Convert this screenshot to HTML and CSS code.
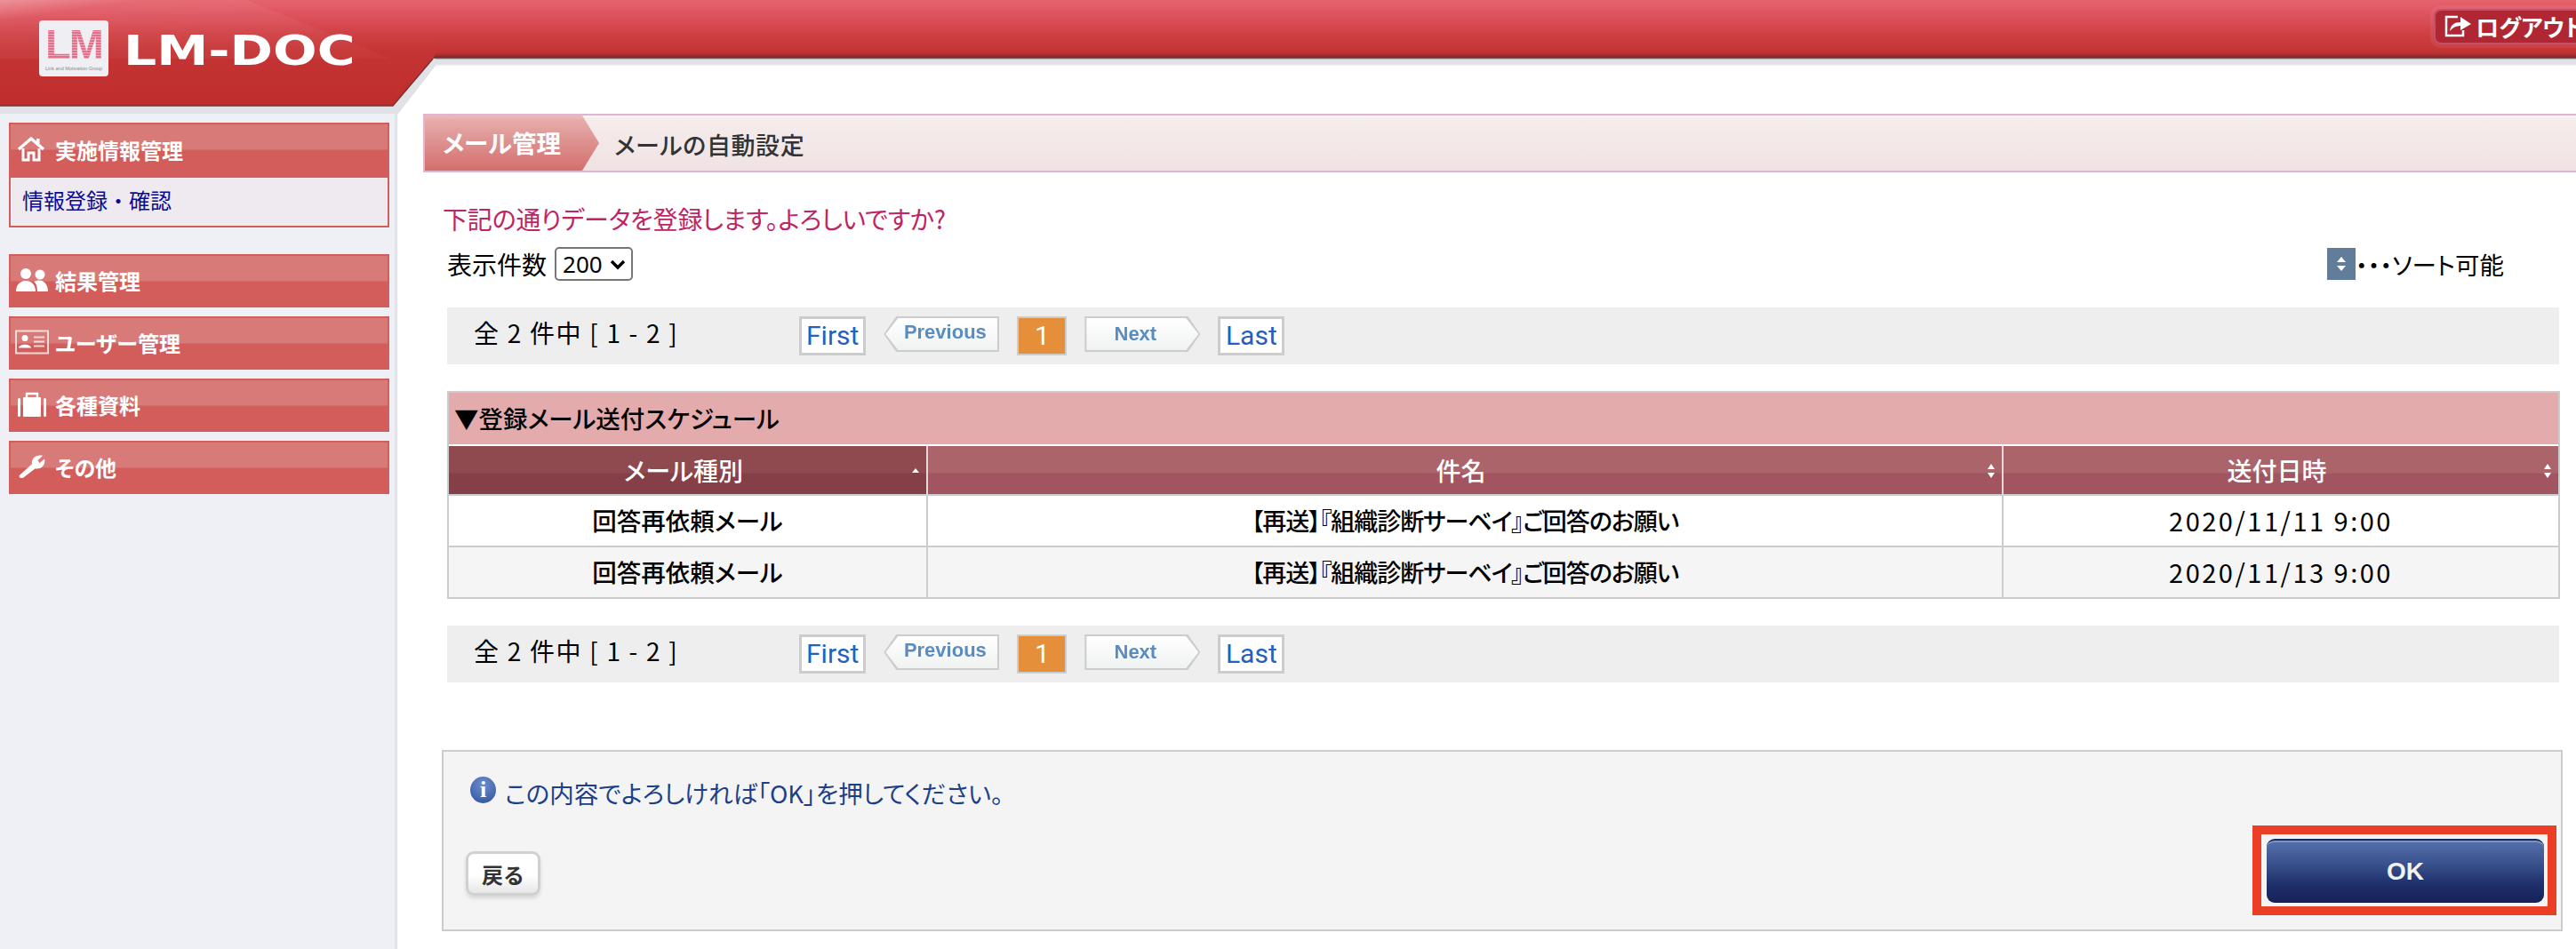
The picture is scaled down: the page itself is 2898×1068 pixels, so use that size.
FILE: index.html
```html
<!DOCTYPE html>
<html lang="ja">
<head>
<meta charset="utf-8">
<title>LM-DOC メールの自動設定</title>
<link rel="stylesheet" href="styles.css">
</head>
<body>
<div class="page">
  <header class="topbar">
    <a class="logout">
      <svg class="logout-icon" viewBox="0 0 32 26"><path d="M16 3H3V24H22V18" fill="none" stroke="#fff" stroke-width="2.5"/><path d="M7 19C8 12 12 9 19 9V3L31 11L19 18V13C14 13 10 15 7 19Z" fill="#fff"/></svg>
      <span>ログアウト</span>
    </a>
  </header>

  <div class="wing">
    <svg class="wing-shape" viewBox="0 0 490 128">
      <defs>
        <linearGradient id="wingRed" gradientUnits="userSpaceOnUse" x1="0" y1="0" x2="0" y2="119">
          <stop offset="0" stop-color="#e5636d"/>
          <stop offset=".118" stop-color="#df5560"/>
          <stop offset=".32" stop-color="#cf4044"/>
          <stop offset=".49" stop-color="#c53434"/>
          <stop offset="1" stop-color="#bf2d2d"/>
        </linearGradient>
        <linearGradient id="wingGlow" x1="0" y1="0" x2="1" y2="1">
          <stop offset="0" stop-color="#fff" stop-opacity=".3"/>
          <stop offset=".18" stop-color="#fff" stop-opacity=".06"/>
          <stop offset="1" stop-color="#fff" stop-opacity=".025"/>
        </linearGradient>
      </defs>
      <polygon points="0,119 442,119 487,66 490,66 490,74 448,128 0,128" fill="#e1e2e6"/>
      <polygon points="0,0 490,0 490,61 487,66 442,119 0,119" fill="url(#wingRed)"/>
      <polygon points="0,0 277,0 440,66 0,66" fill="url(#wingGlow)"/>
      <path d="M0 119H442L487 66" fill="none" stroke="#7b3032" stroke-width="1.5"/>
    </svg>
    <div class="brand">
      <div class="brand-mark">
        <span class="brand-lm">LM</span>
        <span class="brand-sub">Link and Motivation Group</span>
      </div>
      <span class="brand-name">LM-DOC</span>
    </div>
  </div>

  <div class="layout">
    <aside class="sidebar">
      <section class="menu-open">
        <div class="menu-item menu-item-flat">
          <svg class="menu-icon" viewBox="0 0 38 28"><path d="M4 14L18 2L32 14" fill="none" stroke="#fff" stroke-width="3.4"/><path d="M9 13V26H15V18H21V26H27V13" fill="none" stroke="#fff" stroke-width="3"/><rect x="24" y="2" width="3.5" height="7" fill="#fff"/></svg>
          <span>実施情報管理</span>
        </div>
        <a class="menu-link">情報登録・確認</a>
      </section>
      <nav class="menu-list">
        <div class="menu-item">
          <svg class="menu-icon" viewBox="0 0 38 28"><circle cx="12" cy="7" r="6" fill="#fff"/><circle cx="28" cy="8" r="5.5" fill="#fff"/><path d="M1 27C1 19 6 15 12 15C18 15 23 19 23 27Z" fill="#fff"/><path d="M24 15C31 13 37 18 37 27H25C25 22 24 18 21 16Z" fill="#fff"/></svg>
          <span>結果管理</span>
        </div>
        <div class="menu-item">
          <svg class="menu-icon" viewBox="0 0 38 27"><rect x="1" y="1" width="36" height="25" fill="none" stroke="#f6dcdc" stroke-width="2"/><circle cx="11" cy="9" r="3.5" fill="#fff"/><path d="M4 20C5 15 17 15 18 20Z" fill="#fff"/><path d="M21 8H33M21 13H33M21 18H33" stroke="#f6dcdc" stroke-width="2"/></svg>
          <span>ユーザー管理</span>
        </div>
        <div class="menu-item">
          <svg class="menu-icon" viewBox="0 0 38 28"><path d="M13 6V2H25V6" fill="none" stroke="#fff" stroke-width="2.4"/><rect x="9" y="6" width="20" height="22" rx="1" fill="#fff"/><rect x="3" y="7" width="3" height="21" rx="1.5" fill="#fff"/><rect x="32" y="7" width="3" height="21" rx="1.5" fill="#fff"/></svg>
          <span>各種資料</span>
        </div>
        <div class="menu-item">
          <svg class="menu-icon" viewBox="0 0 38 30"><path d="M6 29C4 29 3 27 4 25.500L19 12C18 6 23 0 32 2L26 7.500L28 11L34 6C36 14 29 19 23 17.500L9 28C8 29 7 29 6 29Z" fill="#fff"/></svg>
          <span>その他</span>
        </div>
      </nav>
    </aside>

    <main class="main">
      <div class="titlebar">
        <div class="title-tab">メール管理</div>
        <h1 class="title-text">メールの自動設定</h1>
      </div>

      <div class="content">
        <p class="notice">下記の通りデータを登録します。よろしいですか?</p>

        <div class="tools">
          <label class="count">表示件数
            <select class="count-select"><option>200</option></select>
          </label>
          <div class="legend">
            <span class="legend-icon">
              <svg viewBox="0 0 12 20" class="legend-arrows"><path d="M6 2L11 8H1ZM6 18L1 12H11Z" fill="#fff"/></svg>
            </span>
            <span>・・・ソート可能</span>
          </div>
        </div>

        <div class="pager">
          <span class="pager-count">全 2 件中 [ 1 - 2 ]</span>
          <a class="pg-link">First</a>
          <a class="pg-arrow pg-prev"><span>Previous</span></a>
          <span class="pg-current">1</span>
          <a class="pg-arrow pg-next"><span>Next</span></a>
          <a class="pg-link">Last</a>
        </div>

        <table class="schedule">
          <colgroup><col class="col-type"><col class="col-subject"><col class="col-date"></colgroup>
          <thead>
            <tr><th colspan="3" class="caption-cell">▼登録メール送付スケジュール</th></tr>
            <tr>
              <th class="head sorted">メール種別<svg class="sort-mark" viewBox="0 0 12 20"><path d="M6 7L10 12H2Z" fill="#fff"/></svg></th>
              <th class="head">件名<svg class="sort-mark" viewBox="0 0 12 20"><path d="M6 2L10 8H2ZM6 18L2 12H10Z" fill="#fff"/></svg></th>
              <th class="head">送付日時<svg class="sort-mark" viewBox="0 0 12 20"><path d="M6 2L10 8H2ZM6 18L2 12H10Z" fill="#fff"/></svg></th>
            </tr>
          </thead>
          <tbody>
            <tr><td>回答再依頼メール</td><td class="subject">【再送】『組織診断サーベイ』ご回答のお願い</td><td class="date">2020/11/11 9:00</td></tr>
            <tr class="even"><td>回答再依頼メール</td><td class="subject">【再送】『組織診断サーベイ』ご回答のお願い</td><td class="date">2020/11/13 9:00</td></tr>
          </tbody>
        </table>

        <div class="pager pager-bottom">
          <span class="pager-count">全 2 件中 [ 1 - 2 ]</span>
          <a class="pg-link">First</a>
          <a class="pg-arrow pg-prev"><span>Previous</span></a>
          <span class="pg-current">1</span>
          <a class="pg-arrow pg-next"><span>Next</span></a>
          <a class="pg-link">Last</a>
        </div>

        <section class="confirm">
          <p class="confirm-text">
            <span class="info-icon">i</span>
            <span class="confirm-copy">この内容でよろしければ「OK」を押してください。</span>
          </p>
          <div class="confirm-actions">
            <button class="btn-back">戻る</button>
            <div class="ok-mark"><button class="btn-ok">OK</button></div>
          </div>
        </section>
      </div>
    </main>
  </div>
</div>
</body>
</html>
```
FILE: styles.css
```css
* { box-sizing: border-box; }
html, body { margin: 0; padding: 0; height: 100%; overflow: hidden; background: #fff; }
body {
  font-family: "Noto Sans CJK JP", "Noto Sans", sans-serif;
  font-feature-settings: "palt";
  color: #000;
}
.page { position: relative; width: 2898px; height: 1068px; overflow: hidden; display: flex; flex-direction: column; }

/* header */
.topbar {
  height: 74px;
  flex: none;
  display: flex;
  justify-content: flex-end;
  align-items: flex-start;
  padding-top: 10px;
  background: linear-gradient(#e5636d 0, #df5560 14px, #cf4044 38px, #c53434 58px, #b52e2e 61px, #6e2c2e 65px, #8a8a8e 66px, #e1e2e6 67px, #e1e2e6 72px, #f6f6f8 74px);
}
.logout {
  width: 200px;
  height: 40px;
  margin-right: -40px;
  padding: 0 0 2px 9px;
  display: flex;
  align-items: center;
  gap: 4px;
  background: #b02733;
  border: 2px solid #c2506a;
  border-radius: 8px;
  box-shadow: 0 0 0 4px rgba(255, 255, 255, .06);
  color: #fff;
  font-size: 26px;
  font-weight: 700;
}
.logout-icon { width: 32px; height: 26px; flex: none; }

.wing { position: absolute; left: 0; top: 0; width: 490px; height: 128px; }
.wing-shape { position: absolute; inset: 0; width: 100%; height: 100%; display: block; }
.brand { position: relative; display: flex; align-items: flex-start; padding: 23px 0 0 44px; }
.brand-mark {
  width: 78px;
  height: 63px;
  background: #efeff3;
  border-radius: 4px;
  display: flex;
  flex-direction: column;
  align-items: center;
  padding-top: 4px;
}
.brand-lm {
  font-family: "Liberation Sans", sans-serif;
  font-size: 47px;
  line-height: 46px;
  font-weight: 700;
  letter-spacing: -2px;
  background: repeating-linear-gradient(#e2708a 0 2px, #f0a8b8 2px 3px);
  -webkit-background-clip: text;
  background-clip: text;
  color: transparent;
}
.brand-sub { font-family: "Liberation Sans", sans-serif; font-size: 5.500px; line-height: 8px; color: #888; white-space: nowrap; }
.brand-name {
  margin: 11px 0 0 17px;
  font-family: "DejaVu Sans", sans-serif;
  font-size: 46px;
  line-height: 46px;
  font-weight: 700;
  color: #fff;
  transform: scaleX(1.27);
  transform-origin: left center;
}

/* layout */
.layout { flex: 1; display: grid; grid-template-columns: 447px 1fr; min-height: 0; }
.sidebar {
  background: #eff0f6;
  border-right: 3px solid #e2e3e8;
  padding: 64px 6px 0 10px;
}
.menu-open { border: 2px solid #d25d5a; height: 118px; background: #eeeaf0; }
.menu-item {
  height: 60px;
  display: flex;
  align-items: center;
  gap: 7px;
  padding: 0 0 2px 5px;
  border: 2px solid #d25d5a;
  background: linear-gradient(#d87b78 0 28px, #d25d5a 29px);
  background-clip: padding-box;
  background-color: #d25d5a;
  color: #fff;
  font-size: 24px;
  font-weight: 700;
}
.menu-item-flat { border: 0; padding: 0 0 4px 5px; height: 60px; background: linear-gradient(#d87b78 0 28px, #d25d5a 29px); }
.menu-icon { width: 38px; height: 28px; flex: none; }
.menu-link { display: block; padding: 7px 0 0 13px; line-height: 36px; font-size: 24px; color: #0a0a96; font-feature-settings: normal; }
.menu-list { display: flex; flex-direction: column; gap: 10px; margin-top: 30px; }

/* main */
.main { padding-top: 54px; min-width: 0; }
.titlebar {
  margin-left: 29px;
  height: 66px;
  display: flex;
  align-items: stretch;
  border-top: 2px solid #e3b3d3;
  border-bottom: 2px solid #e3b3d3;
  box-shadow: inset 0 2px 0 #f8f5f5;
  background: linear-gradient(#f6eded, #f0e2e2);
}
.title-tab {
  width: 198px;
  padding: 0 0 2px 20px;
  border-left: 2px solid #e3b3d3;
  display: flex;
  align-items: center;
  clip-path: polygon(0 0, 179px 0, 100% 50%, 179px 100%, 0 100%);
  background: linear-gradient(#e9b8b6 0 3px, #e6adab 4px, #d36f6d 100%);
  color: #fff;
  font-size: 27.500px;
  font-weight: 700;
}
.title-text { margin: 2px 0 0 17px; font-size: 27px; font-weight: 500; color: #333; align-self: center; letter-spacing: .6px; }

.content { padding: 0 15px 0 50px; }
.notice { margin: 35px 0 0 1px; font-size: 28px; line-height: 34px; letter-spacing: -.2px; color: #bf2463; }
.tools { margin: 15px 66px 0 6px; height: 38px; display: flex; justify-content: space-between; align-items: center; }
.count { display: flex; align-items: center; gap: 9px; font-size: 28px; padding-bottom: 0; line-height: 38px; }
.count-select {
  appearance: none;
  -webkit-appearance: none;
  width: 88px;
  height: 38px;
  padding: 0 0 0 7px;
  font-family: "Noto Sans", sans-serif;
  font-size: 26px;
  line-height: 34px;
  color: #000;
  border: 2px solid #767676;
  border-radius: 5px;
  background: #fff url("data:image/svg+xml,%3Csvg xmlns='http://www.w3.org/2000/svg' width='18' height='12'%3E%3Cpath d='M2 2L9 9L16 2' fill='none' stroke='%23000' stroke-width='3.4'/%3E%3C/svg%3E") no-repeat 60px 12px;
}
.legend { display: flex; align-items: center; gap: 0; font-size: 27.500px; }
.legend-icon { width: 32px; height: 36px; background: #627d99; display: flex; align-items: center; justify-content: center; }
.legend-arrows { width: 12px; height: 20px; }

.pager {
  margin: 30px 4px 0 6px;
  height: 64px;
  padding: 10px 0 0 30px;
  background: #eee;
  display: flex;
  align-items: flex-start;
  gap: 20px;
}
.pager-bottom { margin-top: 30px; }
.pager-count { width: 346px; font-size: 28px; line-height: 36px; letter-spacing: 1.700px; }
.pg-link {
  height: 44px;
  padding: 0 5px;
  min-width: 75px;
  border: 3px solid #ccc;
  background: #fff;
  color: #2560c0;
  font-family: Roboto, sans-serif;
  font-size: 30px;
  line-height: 38px;
  text-align: center;
}
.pg-arrow {
  position: relative;
  width: 130px;
  height: 40px;
  background: #ccc;
  display: flex;
  align-items: center;
  justify-content: center;
  font-family: "Liberation Sans", sans-serif;
  font-size: 22px;
  font-weight: 700;
  color: #5b8cc0;
}
.pg-arrow span { position: relative; filter: blur(.5px); }
.pg-arrow::before {
  content: "";
  position: absolute;
  inset: 2px;
  background: linear-gradient(#fff, #f0f2f2);
}
.pg-prev, .pg-prev::before { clip-path: polygon(14px 0, 100% 0, 100% 100%, 14px 100%, 0 50%); }
.pg-next, .pg-next::before { clip-path: polygon(0 0, calc(100% - 14px) 0, 100% 50%, calc(100% - 14px) 100%, 0 100%); }
.pg-prev span { left: 4px; top: -2px; }
.pg-next span { left: -8px; }
.pg-current {
  width: 56px;
  height: 44px;
  border: 2px solid #ccc;
  background: #e68f3a;
  color: #fff;
  font-family: Roboto, sans-serif;
  font-size: 30px;
  line-height: 40px;
  text-align: center;
}

.schedule {
  margin: 30px 4px 0 6px;
  width: 2377px;
  table-layout: fixed;
  border-collapse: separate;
  border-spacing: 0;
  border: 2px solid #ccc;
  border-bottom: 0;
  font-size: 27.500px;
}
.col-type { width: 539px; }
.col-subject { width: 1210px; }
.col-date { width: 624px; }
.caption-cell {
  height: 58px;
  padding: 0 0 2px 6px;
  text-align: left;
  font-size: 27.500px;
  font-weight: 500;
  background: #e3abab;
  border: 0;
}
.head {
  position: relative;
  height: 58px;
  padding: 0 9px 0 0;
  border-top: 2px solid #fff;
  border-bottom: 2px solid #ccc;
  border-right: 2px solid #e4d8da;
  background: linear-gradient(#aa646a 0 30px, #a25560 31px);
  color: #fff;
  font-size: 28px;
  font-weight: 500;
}
.head:last-child { border-right: 0; }
.head.sorted { background: linear-gradient(#8f4a50 0 30px, #843f47 31px); }
.sort-mark { position: absolute; right: 6px; top: 18px; width: 12px; height: 20px; }
.schedule td {
  height: 58px;
  padding: 0 0 2px;
  text-align: center;
  font-weight: 500;
  border-bottom: 2px solid #ccc;
  border-right: 2px solid #ccc;
}
.schedule td:last-child { border-right: 0; }
.schedule .even td { background: #f5f5f5; }
.schedule td.subject { font-size: 27px; letter-spacing: -1px; }
.schedule td.date { font-weight: 400; font-size: 29px; letter-spacing: 2.500px; font-feature-settings: normal; }

.confirm {
  margin-top: 76px;
  height: 204px;
  border: 2px solid #ccc;
  background: #f4f4f4;
  padding: 28px 5px 0 25px;
}
.confirm-text { margin: 0; height: 30px; padding-left: 5px; display: flex; align-items: center; gap: 10px; font-size: 27.500px; color: #1c3f8a; }
.confirm-copy { padding-top: 6px; white-space: nowrap; }
.info-icon {
  width: 29px;
  height: 30px;
  flex: none;
  border-radius: 50%;
  background: radial-gradient(circle at 50% 30%, #6f8fcb, #2c4f9e);
  color: #fff;
  font-family: "Liberation Serif", serif;
  font-size: 26px;
  font-weight: 700;
  line-height: 30px;
  text-align: center;
}
.confirm-actions { margin-top: 25px; display: flex; justify-content: space-between; align-items: flex-start; }
.btn-back {
  margin-top: 29px;
  width: 84px;
  height: 50px;
  padding: 0;
  border: 3px solid #d0d0d0;
  border-radius: 9px;
  background: linear-gradient(#fff 55%, #e6e6e6);
  box-shadow: 0 3px 4px rgba(0, 0, 0, .12);
  font-family: inherit;
  font-size: 24px;
  font-weight: 700;
  color: #333;
}
.ok-mark { border: 10px solid #ea3f24; padding: 5px 4px 4px 6px; display: flex; }
.btn-ok {
  width: 312px;
  height: 72px;
  padding: 0;
  border: 0;
  border-radius: 9px;
  border-top: 2px solid #1a2860;
  box-shadow: inset 0 2px 0 #7d93c0;
  background: linear-gradient(#5670aa, #3b5490 35%, #1f2f6a 70%, #162257);
  color: #f2f2f2;
  font-family: "Liberation Sans", sans-serif;
  font-size: 28px;
  font-weight: 700;
}
```
